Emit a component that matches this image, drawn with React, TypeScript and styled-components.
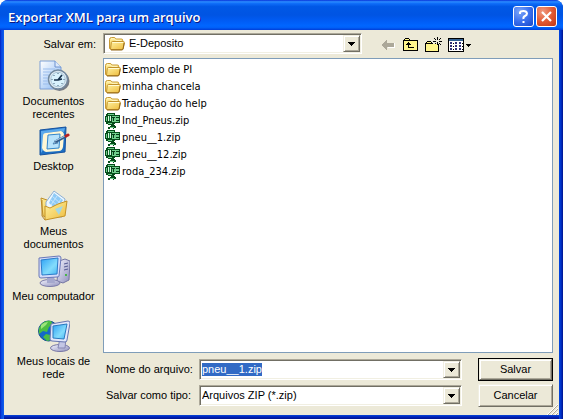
import React, { useEffect, useRef, useState } from "react";
import styled, { createGlobalStyle, css } from "styled-components";

const GlobalStyle = createGlobalStyle`
  *, *::before, *::after { box-sizing: border-box; }
  body { margin: 0; background: #fff; }
  button, input, select { font: inherit; color: inherit; }
  svg { display: block; flex: none; }
`;

const face = "#ece9d8";

const Dialog = styled.form`
  display: flex;
  flex-direction: column;
  min-height: 100vh;
  padding: 0 4px 4px;
  border-radius: 8px 8px 0 0;
  overflow: hidden;
  color: #000;
  font: 11px/13px "Liberation Sans", Arial, sans-serif;
  background: linear-gradient(90deg, #0019b8, #0840dc 1px, #0855ea 3px, #1560e8 4px, transparent 4px),
    linear-gradient(270deg, #00138c, #0030c8 2px, #0048e0 4px, transparent 4px),
    linear-gradient(0deg, #00138c, #0020b8 2px, #0848d8 4px, #0050ee 4px);
`;

const TitleBar = styled.header`
  display: flex;
  align-items: center;
  gap: 2px;
  height: 30px;
  margin: 0 -4px;
  padding: 3px 6px 0 8px;
  background: linear-gradient(
    #0831d9 0%, #2a8cff 6%, #0e6cf8 12%, #0058e6 22%, #0054e3 50%,
    #005cf5 70%, #0066ff 86%, #0060f8 92%, #003dd7 100%
  );
`;

const Title = styled.h1`
  flex: 1;
  margin: 0;
  color: #fff;
  font: 600 13px/18px "Open Sans", "Noto Sans", sans-serif;
  text-shadow: 1px 1px #0a1883;
  white-space: nowrap;
`;

const CaptionButton = styled.button<{ $close?: boolean }>`
  display: grid;
  place-items: center;
  width: 21px;
  height: 21px;
  padding: 0;
  border: 1px solid #fff;
  border-radius: 3px;
  background: ${(p) =>
    p.$close
      ? "radial-gradient(circle at 30% 25%, #f09a80, #e25a33 50%, #bf3513)"
      : "radial-gradient(circle at 30% 25%, #7ba5f8, #3b70ee 50%, #1746c8)"};
`;

const Content = styled.main`
  flex: 1;
  display: grid;
  grid-template-columns: 99px minmax(0, 1fr);
  grid-template-rows: 28px 1fr;
  padding-right: 6px;
  background: ${face};
  position: relative;
`;

const LookInLabel = styled.label`
  padding: 8px 7px 0 0;
  text-align: right;
`;

const TopRow = styled.div`
  display: flex;
  align-items: flex-start;
  padding-top: 3px;
`;

const sunken = css`
  border: 1px solid;
  border-color: #aca899 #fff #fff #aca899;
  background: #fff;
  box-shadow: inset 1px 1px #716f64, inset -1px -1px #f1efe2;
`;

const Combo = styled.div`
  ${sunken}
  position: relative;
  display: flex;
  align-items: center;
  flex: 1;
  min-width: 0;
  height: 21px;
  padding: 1px 1px 1px 2px;
`;

const FolderCombo = styled(Combo)`
  margin-right: 17px;
  padding-left: 5px;
`;

const raised = css`
  border: 1px solid;
  border-color: #f1efe2 #716f64 #716f64 #f1efe2;
  background: ${face};
  box-shadow: inset 1px 1px #fff, inset -1px -1px #aca899;
`;

const Arrow = styled.span`
  ${raised}
  position: absolute;
  top: 1px;
  right: 1px;
  display: grid;
  place-items: center;
  width: 17px;
  height: 17px;
  pointer-events: none;
`;

const ArrowButton = styled.button`
  ${raised}
  display: grid;
  place-items: center;
  flex: none;
  width: 17px;
  height: 17px;
  padding: 0;
`;

const Select = styled.select`
  appearance: none;
  flex: 1;
  min-width: 0;
  height: 17px;
  padding: 0 17px 0 0;
  border: 0;
  outline: 0;
  background: transparent;
`;

const FolderSelect = styled(Select)`
  padding-left: 4px;
`;

const NameInput = styled.input`
  flex: 1;
  min-width: 0;
  height: 13px;
  padding: 0;
  border: 0;
  outline: 0;
  background: transparent;
  &::selection { background: #316ac5; color: #fff; }
`;

const Tools = styled.div`
  display: flex;
  align-items: center;
  gap: 6px;
  width: 174px;
  height: 24px;
`;

const ToolButton = styled.button<{ $wide?: boolean }>`
  display: grid;
  place-items: center;
  width: ${(p) => (p.$wide ? "24px" : "17px")};
  height: 20px;
  padding: 0;
  border: 0;
  background: none;
`;

const Places = styled.nav`
  display: flex;
  flex-direction: column;
  align-items: center;
  padding-top: 2px;
`;

const Place = styled.button<{ $gap: number }>`
  display: flex;
  flex-direction: column;
  align-items: center;
  gap: 3px;
  width: 86px;
  margin-bottom: ${(p) => p.$gap}px;
  padding: 0;
  border: 0;
  background: none;
`;

const Main = styled.section`
  display: flex;
  flex-direction: column;
`;

const FileList = styled.ul`
  flex: 1;
  margin: 0;
  padding: 2px 1px;
  border: 1px solid #7f9db9;
  background: #fff;
  list-style: none;
  font: 11px/17px "DejaVu Sans Condensed", "Noto Sans", sans-serif;
`;

const FileRow = styled.li`
  display: flex;
  align-items: center;
  gap: 1px;
  height: 17px;
`;

const Fields = styled.div`
  display: grid;
  grid-template-columns: 96px minmax(0, 1fr) 75px;
  align-items: center;
  row-gap: 3px;
  padding: 5px 0 8px;
`;

const FieldLabel = styled.label`
  padding-left: 3px;
  white-space: nowrap;
`;

const FieldCombo = styled(Combo)`
  margin-right: 16px;
`;

const PushButton = styled.button<{ $default?: boolean }>`
  ${raised}
  height: 23px;
  padding: 0;
  outline: ${(p) => (p.$default ? "1px solid #000" : "0")};
  outline-offset: -1px;
  border-width: ${(p) => (p.$default ? "2px" : "1px")};
`;

const Grip = styled.svg`
  position: absolute;
  right: 1px;
  bottom: 0;
`;

const DownArrow = () => (
  <svg width="7" height="4" shapeRendering="crispEdges">
    <path d="M0 0h7v1H0zM1 1h5v1H1zM2 2h3v1H2zM3 3h1v1H3z" />
  </svg>
);

const FolderIcon = () => (
  <svg width="16" height="16" viewBox="0 0 16 16">
    <path d="M.5 12.5v-9q0-2 2-2h3.2L7.2 3h5.3q1.2 0 1.2 1.2v8z" fill="url(#gold)" stroke="#c79a35" />
    <path d="M2 2.8h3.2l1.5 1.5h5.8" fill="none" stroke="#fff8c8" />
    <path d="M1.5 13.5l.8-7q.2-1 1.2-1h10.8q1.2 0 1 1.2l-1 5.8q-.2 1-1.2 1z" fill="url(#gold)" stroke="#c1912b" />
    <path d="M3.4 6.5h10.8" stroke="#fffbd4" />
    <path d="M2 14h10.8q1 0 1.2-1l1.2-6" fill="none" stroke="#94691a" />
  </svg>
);

const ZipIcon = () => (
  <svg width="16" height="16" viewBox="0 0 16 16" shapeRendering="crispEdges">
    <path d="M2 0h8v2h5v8h-5v1H9v1h1v1h1v2H9v1H8v-1H5v1H3v-2h2v-1h1v-1H3v-1H1V9H0V3h1V1h1z" fill="#064d1b" />
    <path d="M3 1h6v1H3zM1 4h1v4H1zM3 10h4v1H3zM5 14h4v1H5zM7 3h7v6H7z" fill="#6fce8c" />
    <path d="M3 3h1v5H3zM5 3h1v5H5z" fill="#d8f6df" />
    <path d="M4 3h1v5H4z" fill="#178342" />
    <path d="M7 4h3v1H9v3H8V5H7zM11 4h3v1h-1v1h-1v1h2v1h-3V7h1V6h1V5h-2z" fill="#063c18" />
  </svg>
);

const BackIcon = () => (
  <svg width="14" height="12" viewBox="0 0 14 12" shapeRendering="crispEdges">
    <path d="M2 7l5 5V9h7V4h-1v4H7v3z" fill="#fff" />
    <path d="M0 6l6-6v4h7v4H6v3H5z" fill="#aca899" />
  </svg>
);

const UpIcon = () => (
  <svg width="16" height="14" viewBox="0 0 16 14" shapeRendering="crispEdges">
    <path d="M0 13V2h1V1h1V0h4v1h1v1h8v11z" />
    <path d="M1 3h13v9H1zM2 1h4v1H2z" fill="#fff58b" />
    <path d="M5 4h1v1h1v1h1v1H6v2h5v1H5V7H3V6h1V5h1z" />
  </svg>
);

const NewFolderIcon = () => (
  <svg width="17" height="16" viewBox="0 0 17 16" shapeRendering="crispEdges">
    <path d="M0 15V6h1V5h1V4h4v1h1v1h7v9z" />
    <path d="M1 7h12v7H1zM2 5h4v1H2z" fill="#fff58b" />
    <path d="M8 3h6v4H8z" fill={face} />
    <path d="M12 0h1v3h-1zM12 5h1v3h-1zM8 4h3v1H8zM14 4h3v1h-3zM9 1h1v1H9zM10 2h1v1h-1zM15 1h1v1h-1zM14 2h1v1h-1zM10 6h1v1h-1zM14 6h1v1h-1zM15 7h1v1h-1z" />
  </svg>
);

const ViewsIcon = () => (
  <svg width="24" height="14" viewBox="0 0 24 14" shapeRendering="crispEdges">
    <path d="M0 0h16v14H0z" />
    <path d="M1 3h14v10H1z" fill="#fff" />
    <path d="M1 1h14v2H1z" fill="#315f92" />
    <path d="M2 4h2v2H2zM2 7h2v2H2zM2 10h2v2H2zM7 4h2v2H7zM7 7h2v2H7zM7 10h2v2H7zM11 4h2v2h-2zM11 7h2v2h-2zM11 10h2v2h-2z" fill="#303078" />
    <path d="M5 5h1v1H5zM5 8h1v1H5zM5 11h1v1H5zM14 5h1v1h-1zM14 8h1v1h-1zM14 11h1v1h-1z" />
    <path d="M18 6h5v1h-5zM19 7h3v1h-3zM20 8h1v1h-1z" />
  </svg>
);

const Defs = () => (
  <svg width="0" height="0" aria-hidden="true">
    <defs>
      <linearGradient id="paper" x2="1" y2="1">
        <stop stopColor="#fff" />
        <stop offset="1" stopColor="#86b6f3" />
      </linearGradient>
      <linearGradient id="screen" x2="1" y2="1">
        <stop stopColor="#2da1f4" />
        <stop offset=".6" stopColor="#83dcfc" />
        <stop offset="1" stopColor="#45b4f2" />
      </linearGradient>
      <linearGradient id="metal" x2="1" y2="1">
        <stop stopColor="#f3f3fd" />
        <stop offset="1" stopColor="#8f90bd" />
      </linearGradient>
      <linearGradient id="gold" x2="1" y2="1">
        <stop stopColor="#fff2a2" />
        <stop offset="1" stopColor="#eebc3d" />
      </linearGradient>
    </defs>
  </svg>
);

const RecentIcon = () => (
  <svg width="32" height="32" viewBox="0 0 32 32">
    <path d="M2 1h15l6 6v22H2z" fill="url(#paper)" stroke="#7d9fd6" />
    <path d="M17 1v6h6" fill="#dce9fb" stroke="#6e93cf" />
    <path d="M5 9h12M5 12h8M5 15h6M5 18h5M5 21h6M5 24h7" stroke="#9bbdec" />
    <ellipse cx="21.5" cy="21" rx="10" ry="10" fill="#777c85" />
    <circle cx="20" cy="19.5" r="9.5" fill="#e3eef5" stroke="#71889e" strokeWidth="1.5" />
    <circle cx="20" cy="19.5" r="7.3" fill="#d9f2fd" stroke="#a9c3d4" />
    <path d="M20 13v1M20 25v1M13.5 19.5h1M25.5 19.5h1M15.5 15l1 1M24.5 24l-1-1M15.5 24l1-1" stroke="#46647d" />
    <path d="M24 15l-4 5h-4M20 20l4-1" fill="none" stroke="#17324c" strokeWidth="1.7" />
  </svg>
);

const DesktopIcon = () => (
  <svg width="32" height="32" viewBox="0 0 32 32">
    <path d="M2 5L28 2l-1 25-25 3z" fill="#1c6fc4" stroke="#1552a0" />
    <path d="M3 6l24-3-1 4-4-1L8 8 6 12l-1 13-2 3z" fill="#5ba9ec" />
    <path d="M8 8l15-2q3 1 3 4l-1 12q-1 4-4 4L8 27q-3-1-4-4l1-12q0-3 3-3z" fill="#fff7d5" />
    <path d="M10 10l12-1-1 14-12 1z" fill="#b8e3fc" stroke="#3285cb" />
    <path d="M15 19l3-4 2 3z" fill="#eef8ff" stroke="#4a83b4" />
    <path d="M17 17l11-6" stroke="#315b8a" strokeWidth="3" />
    <path d="M17 16l10-5" stroke="#b2d6ef" strokeWidth="1" />
    <path d="M28 11l2-1" stroke="#b81f20" strokeWidth="3" strokeLinecap="round" />
  </svg>
);

const DocumentsIcon = () => (
  <svg width="32" height="32" viewBox="0 0 32 32">
    <path d="M3 8l6 2 3 3v15l-7-2z" fill="url(#gold)" stroke="#bd8e27" />
    <path d="M8 12L16 1l11 8-3 18H8z" fill="#edf7ff" stroke="#8dafd2" />
    <path d="M16 3l9 7-6 10-8-7z" fill="#8ecaf7" />
    <path d="M14 6l9 8M12 9l9 8M19 6l-6 9M23 9l-6 9" stroke="#c4e5fd" />
    <path d="M7 30V16l5 2 8-4 9-3-2 15z" fill="url(#gold)" stroke="#c59326" />
    <path d="M17 19l8-3-4 9z" fill="#a4d8e5" />
    <path d="M7 30l-3-4V10" fill="none" stroke="#b8872b" />
  </svg>
);

const ComputerIcon = () => (
  <svg width="32" height="32" viewBox="0 0 32 32">
    <path d="M21 6l6-2 5 2-1 19-6 3-6-2z" fill="url(#metal)" stroke="#7476a3" />
    <path d="M26 9l4-1M26 12l4-1M26 15l4-1" stroke="#545a92" />
    <path d="M27 20h2" stroke="#49b649" strokeWidth="2" />
    <ellipse cx="12" cy="28" rx="10" ry="3.5" fill="url(#metal)" stroke="#7b7ba9" />
    <path d="M9 20h7l1 8H9z" fill="#a5a8ce" />
    <path d="M1 3l20-2q2 0 2 2l-2 18q0 1-2 1L3 23q-2 0-2-2z" fill="#d5dcfa" stroke="#6a78b8" />
    <path d="M3 5l17-2-1 16-15 1z" fill="url(#screen)" stroke="#2b7bc9" />
  </svg>
);

const NetworkIcon = () => (
  <svg width="32" height="32" viewBox="0 0 32 32">
    <circle cx="10.5" cy="11" r="10" fill="#1468c8" stroke="#16508e" />
    <path d="M3 5q4-5 10-4l2 3-4 3-2 5-4-1-4 3Q0 8 3 5zM8 14l4 1 1 5-4 1-4-4z" fill="#4bbd44" />
    <path d="M3 5q3-3 7-3L8 5 3 9z" fill="#9be57b" />
    <ellipse cx="22" cy="28" rx="9.5" ry="3.5" fill="url(#metal)" stroke="#7777a4" />
    <path d="M22 18h6l-1 10h-7z" fill="#c3c6e5" stroke="#8586b2" />
    <path d="M13 4l17-3q2 0 2 2l-3 17q0 2-2 2l-13-1q-2 0-2-2z" fill="#e1e6fb" stroke="#6675af" />
    <path d="M15 6l14-2-3 15-11-1z" fill="url(#screen)" stroke="#287abf" />
  </svg>
);

const places = [
  { name: "Documentos recentes", icon: <RecentIcon />, gap: 4 },
  { name: "Desktop", icon: <DesktopIcon />, gap: 17 },
  { name: "Meus documentos", icon: <DocumentsIcon />, gap: 4 },
  { name: "Meu computador", icon: <ComputerIcon />, gap: 17 },
  { name: "Meus locais de rede", icon: <NetworkIcon />, gap: 0 },
];

const folders = ["Exemplo de PI", "minha chancela", "Tradução do help"];
const archives = ["Ind_Pneus.zip", "pneu__1.zip", "pneu__12.zip", "roda_234.zip"];

export default function App() {
  const [name, setName] = useState("pneu__1.zip");
  const nameRef = useRef<HTMLInputElement>(null);

  useEffect(() => {
    nameRef.current?.focus();
    nameRef.current?.select();
  }, []);

  return (
    <>
      <GlobalStyle />
      <Dialog onSubmit={(e) => e.preventDefault()}>
        <TitleBar>
          <Title>Exportar XML para um arquivo</Title>
          <CaptionButton type="button" aria-label="Ajuda">
            <svg width="13" height="15" viewBox="0 0 13 15" fill="none" stroke="#fff" strokeWidth="2">
              <path d="M3 5V3.5Q3.5 2 6.5 2T10 4.5Q10 6 8 7T6.5 10M6.5 12v2" />
            </svg>
          </CaptionButton>
          <CaptionButton type="button" $close aria-label="Fechar">
            <svg width="13" height="13" viewBox="0 0 13 13" stroke="#fff" strokeWidth="2.2">
              <path d="M2 2l9 9M11 2l-9 9" />
            </svg>
          </CaptionButton>
        </TitleBar>
        <Content>
          <LookInLabel htmlFor="folder">Salvar em:</LookInLabel>
          <TopRow>
            <FolderCombo>
              <FolderIcon />
              <FolderSelect id="folder">
                <option>E-Deposito</option>
              </FolderSelect>
              <Arrow><DownArrow /></Arrow>
            </FolderCombo>
            <Tools>
              <ToolButton type="button" disabled aria-label="Voltar"><BackIcon /></ToolButton>
              <ToolButton type="button" aria-label="Um nível acima"><UpIcon /></ToolButton>
              <ToolButton type="button" aria-label="Criar nova pasta"><NewFolderIcon /></ToolButton>
              <ToolButton type="button" $wide aria-label="Modos de exibição"><ViewsIcon /></ToolButton>
            </Tools>
          </TopRow>
          <Places>
            {places.map((p) => (
              <Place key={p.name} type="button" $gap={p.gap}>
                {p.icon}
                <span>{p.name}</span>
              </Place>
            ))}
          </Places>
          <Main>
            <FileList>
              {folders.map((f) => (
                <FileRow key={f}><FolderIcon />{f}</FileRow>
              ))}
              {archives.map((f) => (
                <FileRow key={f}><ZipIcon />{f}</FileRow>
              ))}
            </FileList>
            <Fields>
              <FieldLabel htmlFor="name">Nome do arquivo:</FieldLabel>
              <FieldCombo>
                <NameInput id="name" ref={nameRef} value={name} spellCheck={false} onChange={(e) => setName(e.target.value)} />
                <ArrowButton type="button" aria-label="Nomes anteriores"><DownArrow /></ArrowButton>
              </FieldCombo>
              <PushButton type="submit" $default>Salvar</PushButton>
              <FieldLabel htmlFor="type">Salvar como tipo:</FieldLabel>
              <FieldCombo>
                <Select id="type">
                  <option>Arquivos ZIP (*.zip)</option>
                </Select>
                <Arrow><DownArrow /></Arrow>
              </FieldCombo>
              <PushButton type="button">Cancelar</PushButton>
            </Fields>
          </Main>
          <Grip width="11" height="11" viewBox="0 0 11 11">
            <path d="M0 11L11 0M4 11l7-7M8 11l3-3" stroke="#fff" />
            <path d="M1 11L11 1M5 11l6-6M9 11l2-2" stroke="#aca899" />
          </Grip>
        </Content>
      </Dialog>
      <Defs />
    </>
  );
}
